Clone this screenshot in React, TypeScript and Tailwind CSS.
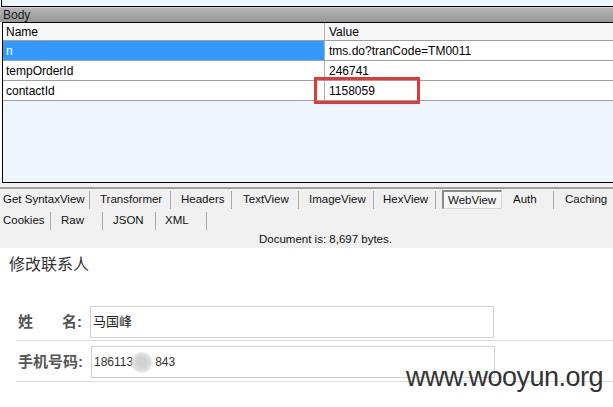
import React from "react";

const ui = { fontFamily: '"Liberation Sans", Arial, sans-serif' };
const cjk = { fontFamily: '"Liberation Sans", "Noto Sans CJK SC", sans-serif' };

type Tab = { label: string; w: number; pl: number; sep?: boolean; active?: boolean };

const row1: Tab[] = [
  { label: "Get SyntaxView", w: 89, pl: 3, sep: true },
  { label: "Transformer", w: 80, pl: 10, sep: true },
  { label: "Headers", w: 60, pl: 10, sep: true },
  { label: "TextView", w: 66, pl: 11, sep: true },
  { label: "ImageView", w: 74, pl: 10, sep: true },
  { label: "HexView", w: 61, pl: 9, sep: true },
  { label: "WebView", w: 66, pl: 6, active: true },
  { label: "Auth", w: 51, pl: 11, sep: true },
  { label: "Caching", w: 59, pl: 11 },
];

const row2: Tab[] = [
  { label: "Cookies", w: 50, pl: 3, sep: true },
  { label: "Raw", w: 51, pl: 10, sep: true },
  { label: "JSON", w: 52, pl: 10, sep: true },
  { label: "XML", w: 50, pl: 9, sep: true },
];

function TabRow({ tabs, h }: { tabs: Tab[]; h: string }) {
  return (
    <div className={`flex ${h} items-center text-[11.5px] text-[#111]`}>
      {tabs.map((t) => (
        <React.Fragment key={t.label}>
          <div className="flex h-full shrink-0 items-center" style={{ width: t.w, paddingLeft: t.pl }}>
            {t.active ? (
              <div className="flex h-[19px] w-[60px] items-center border-l-2 border-t-2 border-r border-b border-l-[#8a8a8a] border-t-[#8a8a8a] border-r-[#d8d8d8] border-b-[#d8d8d8] bg-[#f6f6f6] pl-[4px] pt-[2px]">
                {t.label}
              </div>
            ) : (
              t.label
            )}
          </div>
          {t.sep && <div className="h-[18px] w-px shrink-0 bg-[#a8a8a8]" />}
        </React.Fragment>
      ))}
    </div>
  );
}

export default function App() {
  return (
    <div className="relative h-[407px] w-[613px] overflow-hidden bg-white" style={ui}>
      {/* top strip */}
      <div className="ml-px h-[7px] border-b border-l border-black bg-[#eef6fd]" />
      <div className="h-px bg-[#d0d0d0]" />
      {/* Body bar */}
      <div className="flex h-[14px] items-center bg-gradient-to-b from-[#b6b6b6] to-[#969696] pl-[3px] text-[12px] leading-none text-[#1a1a1a]">
        Body
      </div>
      {/* table */}
      <div className="ml-[2px] flex h-[161px] flex-col border-b border-l border-t border-black bg-[#eef6fd] text-[12px] text-black">
        <div className="flex h-[18px] shrink-0 border-b border-[#a0a0a0] bg-[#f7f7f7]">
          <div className="flex w-[322px] items-center border-r border-[#b0b0b0] pl-[3px]">Name</div>
          <div className="flex flex-1 items-center pl-[4px]">Value</div>
        </div>
        {[
          ["n", "tms.do?tranCode=TM0011", true],
          ["tempOrderId", "246741", false],
          ["contactId", "1158059", false],
        ].map(([k, v, sel]) => (
          <div key={k as string} className="flex h-[20px] shrink-0 border-b border-[#a0a0a0] bg-white">
            <div
              className={`flex w-[322px] items-center border-r border-[#b0b0b0] pl-[3px] ${
                sel ? "bg-[#3399ff] text-white" : ""
              }`}
            >
              {k as string}
            </div>
            <div className="flex flex-1 items-center pl-[4px]">{v as string}</div>
          </div>
        ))}
      </div>
      {/* tabs area */}
      <div className="bg-[#f0f0f0]">
        <div className="h-[4px]" />
        <div className="h-[2px] bg-[#a0a0a0]" />
        <TabRow tabs={row1} h="h-[21px]" />
        <TabRow tabs={row2} h="h-[21px]" />
        <div className="flex h-[17px] items-center pl-[259px] text-[11.5px] text-[#111]">
          Document is: 8,697 bytes.
        </div>
      </div>
      {/* web view */}
      <div style={cjk}>
        <div className="mt-[7px] h-[20px] pl-[9px] text-[16px] leading-[20px] text-[#333]">修改联系人</div>
        <div className="ml-[16px] mt-[28px]">
          <div className="flex h-[38px] items-start border-b border-[#dcdcdc] pt-[3px]">
            <div className="flex h-[32px] w-[74px] items-center pl-[2px] text-[15px] font-bold text-[#555]">
              <span>姓</span>
              <span className="ml-[29px]">名:</span>
            </div>
            <div className="flex h-[32px] w-[404px] items-center border border-[#d0d0d0] pl-[2px] text-[13px] text-[#222]">
              马国峰
            </div>
          </div>
          <div className="flex h-[41px] items-start border-b border-[#dcdcdc] pt-[5px]">
            <div className="flex h-[32px] w-[75px] items-center pl-[2px] text-[15px] font-bold text-[#555]">
              手机号码:
            </div>
            <div className="flex h-[32px] w-[404px] items-center border border-[#d0d0d0] pl-[2px] text-[12px] text-[#333]" style={ui}>
              <span>186113</span>
              <span className="relative inline-block h-[20px] w-[22px]">
                <span className="absolute -left-[3px] top-0 h-[21px] w-[24px] rounded-full bg-[radial-gradient(circle,#d2d2d2_30%,#e0e0e0_55%,rgba(240,240,240,0)_72%)]" />
              </span>
              <span>843</span>
            </div>
          </div>
        </div>
      </div>
      {/* red highlight */}
      <div className="absolute left-[314px] top-[77px] h-[27px] w-[106px] border-[3px] border-[#e0393b]" />
      {/* watermark */}
      <div
        className="absolute left-[406px] top-[364px] text-[27px] leading-[27px] tracking-[-0.5px] text-[#333]"
        style={ui}
      >
        www.wooyun.org
      </div>
    </div>
  );
}
